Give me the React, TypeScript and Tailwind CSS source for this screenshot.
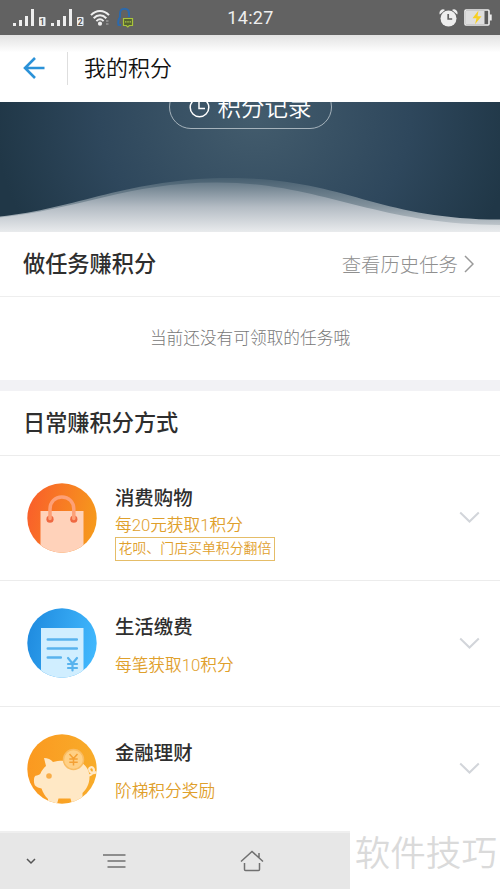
import type { ReactNode } from "react";

type Way = {
  title: string;
  desc: string;
  tag?: string;
  icon: ReactNode;
};

function Signal({ sim }: { sim: string }) {
  return (
    <svg width="33" height="20" viewBox="0 0 33 20" fill="#eeeeee">
      <rect x="0" y="15" width="3" height="3" />
      <rect x="6" y="12" width="3" height="6" />
      <rect x="12" y="8" width="3" height="10" />
      <rect x="18" y="1" width="3" height="17" />
      <rect x="26" y="9" width="6.5" height="9" rx="0.8" />
      <text x="29.3" y="16.7" textAnchor="middle" fontSize="8.5" fontWeight="bold" fill="#555555" fontFamily="Roboto">
        {sim}
      </text>
    </svg>
  );
}

function StatusBar() {
  return (
    <div className="flex h-[35px] shrink-0 items-center justify-between bg-[#626262] pr-[8px] pl-[13px] font-[Roboto,sans-serif]">
      <div className="flex w-[214px] items-center">
        <div className="flex gap-[5px]">
          <Signal sim="1" />
          <Signal sim="2" />
        </div>
        <svg className="ml-[6px]" width="20" height="18" viewBox="0 0 20 18" fill="none" stroke="#eeeeee" strokeWidth="2">
          <path d="M1 6.2C6 .6 14 .6 19 6.2" />
          <path d="M3.7 9.2c3.6-3.8 9-3.8 12.6 0" />
          <path d="M6.4 12.1c2.2-2.2 5-2.2 7.2 0" />
          <circle cx="10" cy="14.7" r="2.1" fill="#eeeeee" stroke="none" />
          <path d="M16 12h2.5M16 15h2.5" stroke="#999999" strokeWidth="1.4" />
        </svg>
        <svg className="ml-[6px]" width="18" height="21" viewBox="0 0 18 21" fill="none">
          <path d="M5 18H2.500c-1-2 0-6 1.500-8V7c0-3.200 1.600-5.200 4.500-5.200S13 3.800 13 7v3" stroke="#2c69ab" strokeWidth="2" />
          <path d="M7.500 11.500h9v7h-3.200l-1.500 1.500-1.500-1.500H7.500z" fill="#55642f" stroke="#a9c53a" strokeWidth="1.200" />
          <path d="M9.200 14.800h1.200m1 0h1.200m1 0h1.200" stroke="#c5de57" strokeWidth="1.200" />
        </svg>
      </div>
      <div className="pt-px text-[18px] leading-none tracking-[0.3px] text-[#eeeeee]">14:27</div>
      <div className="flex w-[218px] items-center justify-end gap-[6px]">
        <svg width="19" height="18" viewBox="0 0 19 18">
          <path d="M.8 5.500A3.600 3.600 0 0 1 6 1zM18.200 5.500A3.600 3.600 0 0 0 13 1z" fill="#eeeeee" />
          <circle cx="9.500" cy="9.500" r="8" fill="#eeeeee" />
          <path d="M9.200 5v5h4" fill="none" stroke="#626262" strokeWidth="1.700" />
        </svg>
        <svg width="28" height="17" viewBox="0 0 28 17">
          <rect x="1" y="1" width="24" height="15" rx="1" fill="#5b5b5b" stroke="#f0f0f0" strokeWidth="1.600" />
          <rect x="2" y="2" width="18.500" height="13" fill="#dedede" />
          <rect x="25.500" y="5.500" width="2.200" height="6" fill="#eeeeee" />
          <path d="M14.500 1.500L8.500 9.300h4l-1.500 6 6.500-8h-4z" fill="#f7cf22" />
        </svg>
      </div>
    </div>
  );
}

function Header() {
  return (
    <header className="flex h-[67px] shrink-0 items-center bg-linear-to-b from-[#e2e2e2] via-white via-[26%] to-white pl-[23px]">
      <svg className="-mt-px" width="22" height="22" viewBox="0 0 22 22" fill="none" stroke="#2b92d8" strokeWidth="2.600">
        <path d="M12 1L2 11l10 10M2 11h19.500" />
      </svg>
      <div className="ml-[22px] h-[33px] w-px bg-[#dedede]" />
      <h1 className="ml-[16px] pb-[6px] text-[22px] leading-none font-[350] text-[#111111]">我的积分</h1>
    </header>
  );
}

function Hero() {
  return (
    <div className="relative flex h-[130px] shrink-0 items-start justify-center overflow-hidden bg-[radial-gradient(ellipse_260px_230px_at_255px_15px,#435c6d,#2e475c_60%,#203747)]">
      <svg className="absolute inset-0" width="500" height="130" viewBox="0 0 500 130">
        <defs>
          <linearGradient id="back" gradientUnits="userSpaceOnUse" x1="0" y1="76" x2="0" y2="130">
            <stop offset="0" stopColor="#475f70" />
            <stop offset="0.500" stopColor="#7f8f9a" />
            <stop offset="1" stopColor="#d3d7db" />
          </linearGradient>
          <linearGradient id="front" gradientUnits="userSpaceOnUse" x1="0" y1="80" x2="0" y2="130">
            <stop offset="0" stopColor="#657987" />
            <stop offset="0.500" stopColor="#b4bcc4" />
            <stop offset="1" stopColor="#e9ebed" />
          </linearGradient>
        </defs>
        <path d="M0 114.500C75 107 130 76 230 76C345 76 375 117 500 117.500V130H0z" fill="url(#back)" />
        <path d="M0 115.500C75 108 130 80.500 215 80.500C320 80 375 123 500 123V130H0z" fill="url(#front)" />
      </svg>
      <button
        type="button"
        className="relative -mt-[17px] flex h-[44px] w-[163px] items-center justify-center gap-[8px] rounded-full border border-[#a5b2bb] text-[23.500px] leading-none font-[350] text-white"
      >
        <svg width="21" height="21" viewBox="0 0 21 21" fill="none" stroke="#ffffff" strokeWidth="1.500">
          <circle cx="10.500" cy="10.500" r="9.300" />
          <path d="M10 5v6.500h6" />
        </svg>
        <span>积分记录</span>
      </button>
    </div>
  );
}

function BagIcon() {
  return (
    <svg width="70" height="70" viewBox="0 0 70 70">
      <defs>
        <linearGradient id="bag" x1="0" y1="0.400" x2="1" y2="0.600">
          <stop offset="0" stopColor="#f9602a" />
          <stop offset="1" stopColor="#f69a1c" />
        </linearGradient>
        <clipPath id="disc">
          <circle cx="35" cy="35" r="34.700" />
        </clipPath>
      </defs>
      <circle cx="35" cy="35" r="34.700" fill="url(#bag)" />
      <rect x="13.500" y="28" width="43" height="42" fill="#ffd2ba" clipPath="url(#disc)" />
      <circle cx="23" cy="36.200" r="3.600" fill="#ef6841" />
      <circle cx="46.800" cy="36.200" r="3.600" fill="#ef6841" />
      <path d="M23 35.500V26c0-7 5-12 11.900-12S46.800 19 46.800 26v9.500" fill="none" stroke="#fda077" strokeWidth="3.500" strokeLinecap="round" />
    </svg>
  );
}

function BillIcon() {
  return (
    <svg width="70" height="70" viewBox="0 0 70 70">
      <defs>
        <linearGradient id="bill" x1="0" y1="0.400" x2="1" y2="0.600">
          <stop offset="0" stopColor="#208ce0" />
          <stop offset="1" stopColor="#41b8fd" />
        </linearGradient>
      </defs>
      <circle cx="35" cy="35" r="34.700" fill="url(#bill)" />
      <rect x="14" y="20" width="42.500" height="50" fill="#d0eeff" clipPath="url(#disc)" />
      <g fill="none" stroke="#58b3ee" strokeWidth="2.600" strokeLinecap="round">
        <path d="M20.800 31.500h29M20.800 40.500h29M20.800 49.500h13" />
        <path d="M41 50l4.500 5.500L50 50M45.500 55.500v7M41 56h9M41 60h9" strokeWidth="2.200" />
      </g>
    </svg>
  );
}

function PiggyIcon() {
  return (
    <svg width="70" height="70" viewBox="0 0 70 70">
      <defs>
        <linearGradient id="piggy" x1="0" y1="0.500" x2="1" y2="0.500">
          <stop offset="0" stopColor="#fb9920" />
          <stop offset="1" stopColor="#f8ac2a" />
        </linearGradient>
      </defs>
      <circle cx="35" cy="35" r="34.700" fill="url(#piggy)" />
      <g clipPath="url(#disc)">
        <path
          d="M17 24c3.500 0 7 1.500 9 4 3-.8 6-1.200 10-1.200h14c7 2.200 12 7.500 12.500 15 .3 8-3 13.500-7 17.200V70H45l-1.500-5.500H31.500L30 70h-9v-5c-3-3-5-6.500-6.500-10.500-2.500-.5-5-1.500-6.500-3C6.500 49 6.500 43 8.500 41.800c2-.2 3.800-1 5-2.300 1.200-3 3.200-5.500 5.500-7.500z"
          fill="#ffe8c5"
        />
      </g>
      <path d="M60 42c5.500-1 8-4.500 6.500-7.500-1.500-2.500-5.500-1-4 2 1 2.500 4 3.500 7 1.500" fill="none" stroke="#ffe8c5" strokeWidth="2.200" />
      <circle cx="22" cy="42" r="2.800" fill="#f8ad49" />
      <circle cx="46.500" cy="25.500" r="10" fill="#ffd085" stroke="#f9bc62" strokeWidth="1.500" />
      <path d="M42.500 20l4 4.500 4-4.500M46.500 24.500v7M42.300 25h8.400M42.300 28.200h8.400" fill="none" stroke="#f4a034" strokeWidth="1.500" />
    </svg>
  );
}

const ways: Way[] = [
  { title: "消费购物", desc: "每20元获取1积分", tag: "花呗、门店买单积分翻倍", icon: <BagIcon /> },
  { title: "生活缴费", desc: "每笔获取10积分", icon: <BillIcon /> },
  { title: "金融理财", desc: "阶梯积分奖励", icon: <PiggyIcon /> },
];

function WayRow({ way }: { way: Way }) {
  return (
    <li className="flex h-[125.500px] items-center border-t border-[#ececec] pr-[20px] pl-[27.400px]">
      {way.icon}
      <div className={way.tag ? "ml-[17.600px] flex-1 pt-[10px]" : "ml-[17.600px] flex-1 pt-[5px]"}>
        <h3 className="text-[19.400px] leading-[24px] font-medium text-[#2e2e2e]">{way.title}</h3>
        <p
          className={
            way.tag
              ? "mt-[5px] font-[Roboto,'Noto_Sans_CJK_SC',sans-serif] text-[16.700px] leading-[24px] font-[350] text-[#dfa02c]"
              : "mt-[16px] -mb-px font-[Roboto,'Noto_Sans_CJK_SC',sans-serif] text-[16.700px] leading-[24px] font-[350] text-[#dfa02c]"
          }
        >
          {way.desc}
        </p>
        {way.tag && (
          <span className="-mt-px flex h-[24px] w-[160px] items-center justify-center border border-[#e5bd68] pb-px text-[13.900px] leading-none font-[350] whitespace-nowrap text-[#dfa02c]">
            {way.tag}
          </span>
        )}
      </div>
      <svg width="21" height="13" viewBox="0 0 21 13" fill="none" stroke="#d2d5da" strokeWidth="2">
        <path d="M1.200 1.500l9.300 9 9.300-9" />
      </svg>
    </li>
  );
}

function BottomBar() {
  return (
    <div className="flex h-[58px] shrink-0">
      <nav className="flex w-[350px] items-center border-t-2 border-[#efefef] bg-[#e7e7e7] pl-[26px]">
        <svg width="10" height="7" viewBox="0 0 10 7" fill="none" stroke="#555555" strokeWidth="1.500">
          <path d="M1 1l4 4 4-4" />
        </svg>
        <svg className="ml-[67px]" width="23" height="16" viewBox="0 0 23 16" fill="none" stroke="#707070" strokeWidth="1.500">
          <path d="M0 2h22.500M4.500 8h18M4.500 14h18" />
        </svg>
        <svg className="ml-[114px]" width="24" height="22" viewBox="0 0 24 22" fill="none" stroke="#707070" strokeWidth="1.500">
          <path d="M1 11.500L12 1.500l11 10M19 8V3M4.500 13v6.500q0 1 1 1h13q1 0 1-1V13" />
        </svg>
      </nav>
      <div className="flex flex-1 justify-end pt-[2px] pr-[3px] text-[35.600px] leading-[36px] font-[350] whitespace-nowrap text-[#dadada]">
        软件技巧
      </div>
    </div>
  );
}

export default function App() {
  return (
    <main className="flex h-[889px] w-[500px] flex-col overflow-hidden bg-white font-['Noto_Sans_CJK_SC',sans-serif]">
      <StatusBar />
      <Header />
      <Hero />
      <section className="h-[148px] shrink-0">
        <div className="flex h-[65px] items-center justify-between border-b border-[#eeeeee] pr-[26px] pl-[23px]">
          <h2 className="pb-[3px] text-[22.200px] leading-none font-medium text-[#2e2e2e]">做任务赚积分</h2>
          <div className="flex items-center gap-[6px] text-[19.400px] leading-none font-light text-[#8f8f8f]">
            <span>查看历史任务</span>
            <svg width="10" height="18" viewBox="0 0 10 18" fill="none" stroke="#999999" strokeWidth="1.500">
              <path d="M1 1l8 8-8 8" />
            </svg>
          </div>
        </div>
        <p className="pt-[28px] text-center text-[16.700px] leading-[24px] font-light text-[#777777]">当前还没有可领取的任务哦</p>
      </section>
      <div className="h-[11px] shrink-0 bg-[#f2f2f5]" />
      <section className="h-[440px] shrink-0">
        <h2 className="flex h-[63.500px] items-center pb-[4px] pl-[23px] text-[22.200px] leading-none font-medium text-[#2e2e2e]">日常赚积分方式</h2>
        <ul>
          {ways.map((way) => (
            <WayRow key={way.title} way={way} />
          ))}
        </ul>
      </section>
      <BottomBar />
    </main>
  );
}
